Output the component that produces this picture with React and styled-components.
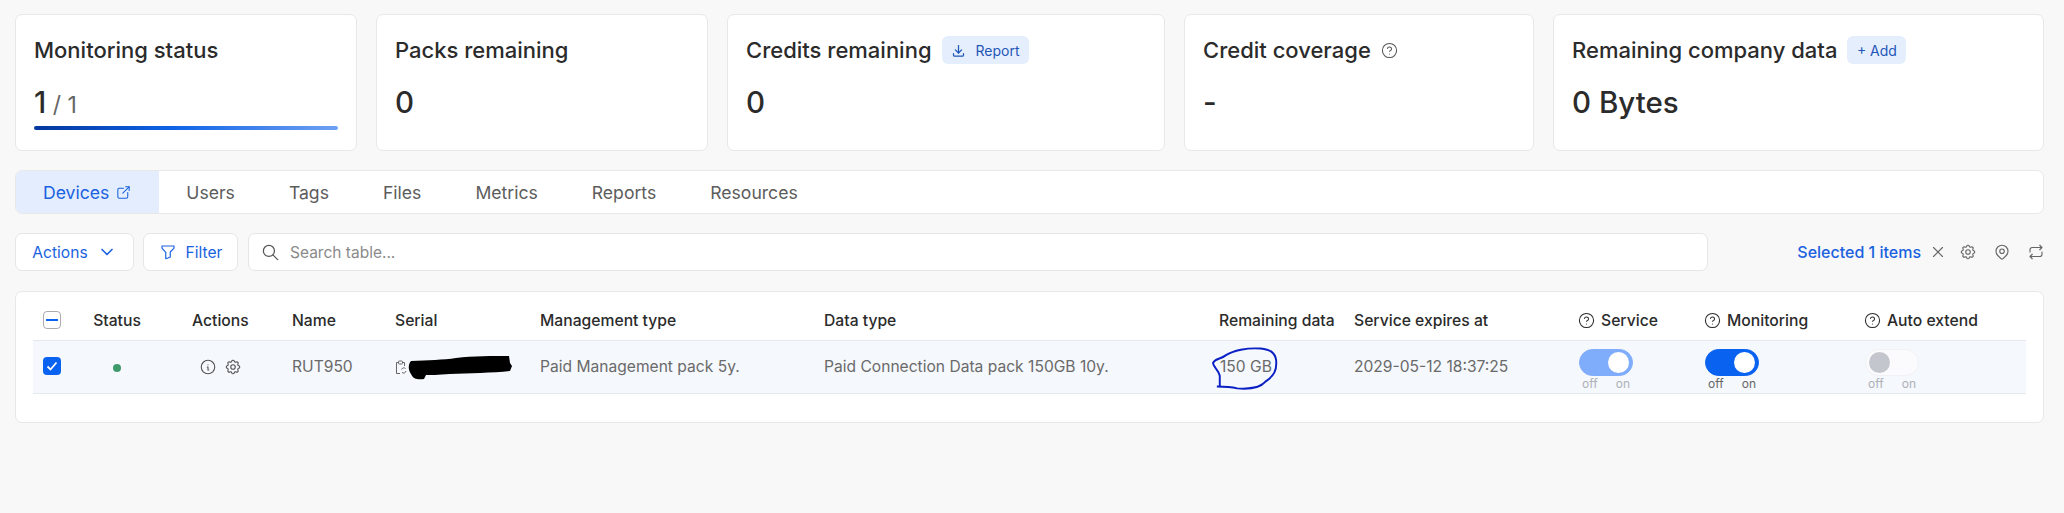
import React from "react";
import styled, { createGlobalStyle } from "styled-components";
import { CircleHelp } from "lucide-react";
import {
  TbChevronDown,
  TbDownload,
  TbExternalLink,
  TbFilter,
  TbInfoCircle,
  TbMapPin,
  TbRepeat,
  TbSearch,
  TbSettings,
  TbX,
} from "react-icons/tb";

const tabs = ["Users", "Tags", "Files", "Metrics", "Reports", "Resources"];

const App = () => {
  return (
    <>
      <GlobalStyle />
      <Page>
        <Cards>
          <Card>
            <CardTitle>Monitoring status</CardTitle>
            <CardValue>
              1<Total> / 1</Total>
            </CardValue>
            <Progress />
          </Card>
          <Card>
            <CardTitle>Packs remaining</CardTitle>
            <CardValue>0</CardValue>
          </Card>
          <Card>
            <CardTitle>
              Credits remaining
              <SoftButton $width={87}>
                <TbDownload size={15} />
                Report
              </SoftButton>
            </CardTitle>
            <CardValue>0</CardValue>
          </Card>
          <Card>
            <CardTitle>
              Credit coverage
              <CircleHelp size={17} color="#555" strokeWidth={1.5} />
            </CardTitle>
            <CardValue>-</CardValue>
          </Card>
          <Card>
            <CardTitle>
              Remaining company data
              <SoftButton $width={59}>+ Add</SoftButton>
            </CardTitle>
            <CardValue>0 Bytes</CardValue>
          </Card>
        </Cards>

        <TabBar>
          <ActiveTab>
            Devices
            <TbExternalLink size={17} strokeWidth={1.5} />
          </ActiveTab>
          {tabs.map((tab) => (
            <Tab key={tab}>{tab}</Tab>
          ))}
        </TabBar>

        <Toolbar>
          <ToolButton $width={119}>
            Actions
            <TbChevronDown size={20} />
          </ToolButton>
          <ToolButton $width={95}>
            <TbFilter size={18} strokeWidth={1.6} />
            Filter
          </ToolButton>
          <SearchBox>
            <TbSearch size={19} color="#555" strokeWidth={1.6} />
            Search table...
          </SearchBox>
          <Selection>
            <SelectedText>Selected 1 items</SelectedText>
            <CloseIcon size={18} strokeWidth={1.5} />
            <TbSettings size={18} strokeWidth={1.5} />
            <TbMapPin size={18} strokeWidth={1.5} />
            <TbRepeat size={18} strokeWidth={1.5} />
          </Selection>
        </Toolbar>

        <TablePanel>
          <HeadRow>
            <HeadCheck />
            <StatusCell>Status</StatusCell>
            <span>Actions</span>
            <span>Name</span>
            <span>Serial</span>
            <span>Management type</span>
            <span>Data type</span>
            <span>Remaining data</span>
            <span>Service expires at</span>
            <HelpHead>
              <CircleHelp size={17} strokeWidth={1.5} />
              Service
            </HelpHead>
            <HelpHead>
              <CircleHelp size={17} strokeWidth={1.5} />
              Monitoring
            </HelpHead>
            <HelpHead>
              <CircleHelp size={17} strokeWidth={1.5} />
              Auto extend
            </HelpHead>
          </HeadRow>
          <BodyRow>
            <RowCheck>
              <svg width="14" height="14" viewBox="0 0 14 14" fill="none">
                <path d="M2.5 7.5l3 3 6-7" stroke="#fff" strokeWidth="1.8" />
              </svg>
            </RowCheck>
            <StatusCell>
              <Dot />
            </StatusCell>
            <ActionIcons>
              <TbInfoCircle size={18} strokeWidth={1.5} />
              <TbSettings size={18} strokeWidth={1.5} />
            </ActionIcons>
            <BodyText>RUT950</BodyText>
            <SerialCell>
              <svg width="12" height="15" viewBox="0 0 12 15" fill="none" stroke="#666" strokeWidth="1">
                <path d="M3 2.5H1.5v11H5M8 2.5h1.5V6" />
                <rect x="3.5" y="1" width="4" height="3" rx="0.8" />
                <path d="M6.5 9.5a2.5 2.5 0 0 1 4-1M11 11a2.5 2.5 0 0 1-4 1.5" />
              </svg>
              <Redaction width="104" height="25" viewBox="0 0 104 25">
                <path
                  d="M3 6 C20 5 35 5 48 3 C65 1 85 1 101 1 L102 8 L104 11 L102 16 C85 18 60 18 42 19 C30 20 22 20 18 20 L16 24 C10 25 5 24 3 19 C0 15 0 9 3 6 Z"
                  fill="#000"
                />
              </Redaction>
            </SerialCell>
            <BodyText>Paid Management pack 5y.</BodyText>
            <BodyText>Paid Connection Data pack 150GB 10y.</BodyText>
            <RemainingCell>
              150 GB
              <Scribble width="68" height="44" viewBox="0 0 70 44" fill="none">
                <path
                  d="M5 41 C12 41 18 41 26 43 C38 44 50 42 55 36 C64 30 67 24 66 14 C65 6 60 3 50 2 C36 1 22 4 14 9 C9 13 3 12 1 17 C2 22 7 24 8 30 L8 41"
                  stroke="#0a1fc4"
                  strokeWidth="2"
                />
              </Scribble>
            </RemainingCell>
            <BodyText>2029-05-12 18:37:25</BodyText>
            <Toggle $track="#7fadfb" $knob="#fff" $on />
            <Toggle $track="#0a62f0" $knob="#fff" $on $strong />
            <Toggle $track="#fbfbfd" $knob="#c3c6cd" />
          </BodyRow>
        </TablePanel>
      </Page>
    </>
  );
};

const Toggle = ({ $track, $knob, $on, $strong }) => (
  <ToggleWrap>
    <Track $track={$track} $on={$on}>
      <Knob $knob={$knob} />
    </Track>
    <ToggleLabels $strong={$strong}>
      <span>off</span>
      <span>on</span>
    </ToggleLabels>
  </ToggleWrap>
);

const GlobalStyle = createGlobalStyle`
  html, body {
    margin: 0;
    background: #f8f8f8;
  }
  body {
    font-family: Inter, "Liberation Sans", sans-serif;
    color: #2b2b2b;
  }
`;

const Page = styled.div`
  width: 2064px;
  height: 513px;
  box-sizing: border-box;
  padding: 14px 20px 0 15px;
  overflow: hidden;
`;

const Cards = styled.div`
  display: grid;
  grid-template-columns: 342px 332px 438px 350px 1fr;
  gap: 19px;
`;

const Card = styled.div`
  height: 137px;
  box-sizing: border-box;
  padding: 20px 18px 0;
  background: #fff;
  border: 1px solid #e8e8e8;
  border-radius: 7px;
`;

const CardTitle = styled.div`
  height: 30px;
  display: flex;
  align-items: center;
  gap: 10px;
  font-size: 22px;
  font-weight: 500;
  white-space: nowrap;
`;

const CardValue = styled.div`
  margin-top: 18px;
  height: 38px;
  line-height: 38px;
  font-size: 29.5px;
  font-weight: 500;
`;

const Total = styled.span`
  font-size: 23px;
  font-weight: 400;
  color: #666;
`;

const Progress = styled.div`
  margin-top: 5px;
  height: 4px;
  border-radius: 2px;
  background: linear-gradient(90deg, #04379c, #0e62e6 45%, #6fa1f2);
`;

const SoftButton = styled.div`
  width: ${(props) => props.$width}px;
  height: 28px;
  display: flex;
  align-items: center;
  justify-content: center;
  gap: 10px;
  border-radius: 6px;
  background: #e5eefd;
  color: #1f56b8;
  font-size: 14px;
  font-weight: 400;
`;

const TabBar = styled.div`
  margin-top: 19px;
  height: 44px;
  box-sizing: border-box;
  display: flex;
  background: #fff;
  border: 1px solid #e8e8e8;
  border-radius: 7px;
  overflow: hidden;
`;

const Tab = styled.div`
  display: flex;
  align-items: center;
  padding: 0 27px;
  font-size: 17.6px;
  color: #5c5c5c;
`;

const ActiveTab = styled(Tab)`
  gap: 6px;
  background: #e3edfd;
  color: #1a62e0;
`;

const Toolbar = styled.div`
  margin-top: 19px;
  height: 38px;
  display: flex;
  align-items: center;
  gap: 9px;
`;

const ToolButton = styled.div`
  flex: none;
  width: ${(props) => props.$width}px;
  height: 100%;
  box-sizing: border-box;
  display: flex;
  align-items: center;
  justify-content: center;
  gap: 9px;
  background: #fff;
  border: 1px solid #e6e6e6;
  border-radius: 7px;
  color: #1a62e0;
  font-size: 15.6px;
`;

const SearchBox = styled.div`
  flex: none;
  width: 1460px;
  height: 100%;
  box-sizing: border-box;
  display: flex;
  align-items: center;
  gap: 10px;
  padding-left: 12px;
  margin-left: 1px;
  background: #fff;
  border: 1px solid #e6e6e6;
  border-radius: 7px;
  color: #8a8a8a;
  font-size: 15.5px;
`;

const Selection = styled.div`
  display: flex;
  align-items: center;
  gap: 16px;
  margin-left: auto;
  margin-right: -1px;
  color: #666;
`;

const SelectedText = styled.span`
  color: #1a62e0;
  font-size: 16px;
  font-weight: 500;
  white-space: nowrap;
  margin-right: -8px;
`;

const CloseIcon = styled(TbX)`
  margin-right: -4px;
`;

const TablePanel = styled.div`
  margin-top: 20px;
  height: 132px;
  box-sizing: border-box;
  padding: 0 17px;
  background: #fff;
  border: 1px solid #e8e8e8;
  border-radius: 7px;
`;

const Row = styled.div`
  display: grid;
  grid-template-columns: 50px 99px 100px 103px 145px 284px 395px 135px 225px 126px 160px 1fr;
  align-items: center;
  padding-left: 10px;
  box-sizing: border-box;
  white-space: nowrap;
`;

const HeadRow = styled(Row)`
  height: 49px;
  padding-top: 8px;
  border-bottom: 1px solid #e4e7ec;
  font-size: 15.7px;
  font-weight: 500;
`;

const BodyRow = styled(Row)`
  height: 53px;
  padding-bottom: 3px;
  border-bottom: 1px solid #e4e7ec;
  background: #f5f8fd;
  color: #6a6a6a;
  font-size: 15.6px;
`;

const BodyText = styled.span`
  padding-top: 1px;
`;

const HeadCheck = styled.div`
  width: 18px;
  height: 18px;
  box-sizing: border-box;
  display: flex;
  align-items: center;
  justify-content: center;
  border: 1px solid #aaa;
  border-radius: 4px;
  &::after {
    content: "";
    width: 12px;
    height: 2px;
    background: #0a62f0;
  }
`;

const RowCheck = styled.div`
  width: 18px;
  height: 18px;
  display: flex;
  align-items: center;
  justify-content: center;
  border-radius: 4px;
  background: #0a62f0;
`;

const StatusCell = styled.div`
  width: 48px;
  display: flex;
  justify-content: center;
`;

const Dot = styled.div`
  width: 8px;
  height: 8px;
  margin-top: 5px;
  border-radius: 50%;
  background: #3f9a6b;
`;

const ActionIcons = styled.div`
  display: flex;
  align-items: center;
  gap: 7px;
  padding: 3px 0 0 7px;
  color: #555;
`;

const SerialCell = styled.div`
  display: flex;
  align-items: center;
  gap: 1px;
  padding-top: 3px;
`;

const Redaction = styled.svg`
  flex: none;
`;

const RemainingCell = styled.div`
  position: relative;
  padding: 1px 0 0 1px;
`;

const Scribble = styled.svg`
  position: absolute;
  left: -7px;
  top: -10px;
`;

const HelpHead = styled.div`
  display: flex;
  align-items: center;
  gap: 6px;
  margin-left: -1px;
`;

const ToggleWrap = styled.div`
  align-self: start;
  width: 54px;
  height: 40px;
  margin-top: 8px;
`;

const Track = styled.div`
  height: 27px;
  box-sizing: border-box;
  display: flex;
  align-items: center;
  justify-content: ${(props) => (props.$on ? "flex-end" : "flex-start")};
  padding: 0 3px;
  border: 1px solid ${(props) => (props.$track === "#fbfbfd" ? "#f0f1f4" : props.$track)};
  border-radius: 14px;
  background: ${(props) => props.$track};
`;

const Knob = styled.div`
  width: 21px;
  height: 21px;
  border-radius: 50%;
  background: ${(props) => props.$knob};
`;

const ToggleLabels = styled.div`
  display: flex;
  justify-content: space-between;
  padding: 0 3px;
  font-size: 12px;
  line-height: 16px;
  color: ${(props) => (props.$strong ? "#666" : "#adb1b8")};
`;

export default App;
